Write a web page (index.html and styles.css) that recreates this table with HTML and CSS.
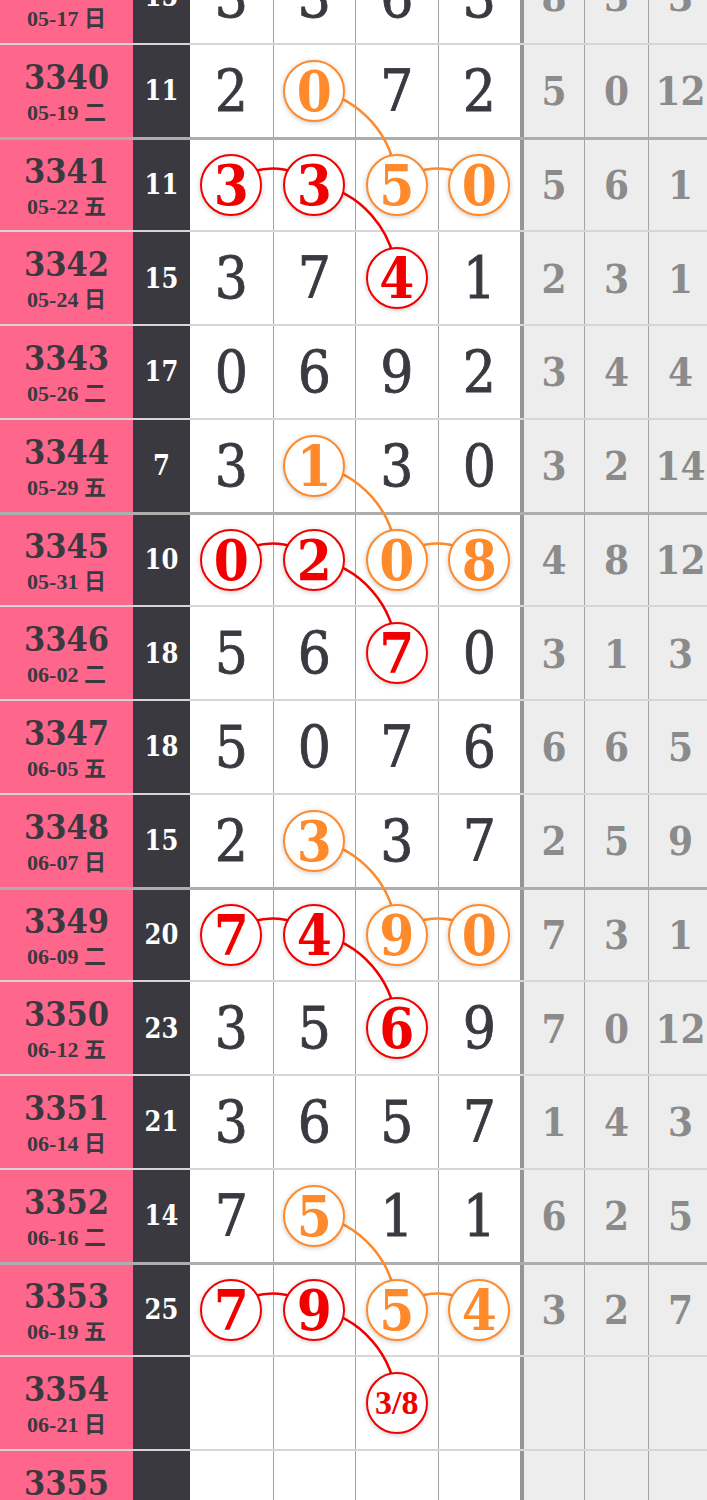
FILE: index.html
```html
<!DOCTYPE html>
<html lang="zh">
<head>
    <meta charset="UTF-8">
    <meta name="viewport" content="width=device-width, initial-scale=1.0">
    <title>走势图</title>
    <link rel="stylesheet" href="styles.css">
</head>
<body>
    <div class="board">
        <svg class="links" width="707" height="1500" viewBox="0 0 707 1500">
            <!-- group 3340-3342 -->
            <path class="orange-line" d="M313.75 89.9 A98 98 0 0 1 396.25 183.6"/>
            <path class="orange-line" d="M396.25 183.6 A64 64 0 0 1 478.75 183.6"/>
            <path class="red-line" d="M231.25 183.6 A64 64 0 0 1 313.75 183.6"/>
            <path class="red-line" d="M313.75 183.6 A98 98 0 0 1 396.25 277.4"/>
            <!-- group 3344-3346 -->
            <path class="orange-line" d="M313.75 464.9 A98 98 0 0 1 396.25 558.6"/>
            <path class="orange-line" d="M396.25 558.6 A64 64 0 0 1 478.75 558.6"/>
            <path class="red-line" d="M231.25 558.6 A64 64 0 0 1 313.75 558.6"/>
            <path class="red-line" d="M313.75 558.6 A98 98 0 0 1 396.25 652.4"/>
            <!-- group 3348-3350 -->
            <path class="orange-line" d="M313.75 839.9 A98 98 0 0 1 396.25 933.6"/>
            <path class="orange-line" d="M396.25 933.6 A64 64 0 0 1 478.75 933.6"/>
            <path class="red-line" d="M231.25 933.6 A64 64 0 0 1 313.75 933.6"/>
            <path class="red-line" d="M313.75 933.6 A98 98 0 0 1 396.25 1027.4"/>
            <!-- group 3352-3354 -->
            <path class="orange-line" d="M313.75 1214.9 A98 98 0 0 1 396.25 1308.6"/>
            <path class="orange-line" d="M396.25 1308.6 A64 64 0 0 1 478.75 1308.6"/>
            <path class="red-line" d="M231.25 1308.6 A64 64 0 0 1 313.75 1308.6"/>
            <path class="red-line" d="M313.75 1308.6 A98 98 0 0 1 396.25 1402.4"/>
        </svg>

        <div class="row">
            <div class="issue"><b>3339</b><span>05-17 日</span></div>
            <div class="sum">15</div>
            <div class="num first">3</div><div class="num">3</div><div class="num">6</div><div class="num">3</div>
            <div class="gray first">8</div><div class="gray">3</div><div class="gray">3</div>
        </div>
        <div class="row">
            <div class="issue"><b>3340</b><span>05-19 二</span></div>
            <div class="sum">11</div>
            <div class="num first">2</div><div class="num"><i class="ball orange">0</i></div><div class="num">7</div><div class="num">2</div>
            <div class="gray first">5</div><div class="gray">0</div><div class="gray">12</div>
        </div>
        <div class="row group">
            <div class="issue"><b>3341</b><span>05-22 五</span></div>
            <div class="sum">11</div>
            <div class="num first"><i class="ball red">3</i></div><div class="num"><i class="ball red">3</i></div><div class="num"><i class="ball orange">5</i></div><div class="num"><i class="ball orange">0</i></div>
            <div class="gray first">5</div><div class="gray">6</div><div class="gray">1</div>
        </div>
        <div class="row">
            <div class="issue"><b>3342</b><span>05-24 日</span></div>
            <div class="sum">15</div>
            <div class="num first">3</div><div class="num">7</div><div class="num"><i class="ball red">4</i></div><div class="num">1</div>
            <div class="gray first">2</div><div class="gray">3</div><div class="gray">1</div>
        </div>
        <div class="row">
            <div class="issue"><b>3343</b><span>05-26 二</span></div>
            <div class="sum">17</div>
            <div class="num first">0</div><div class="num">6</div><div class="num">9</div><div class="num">2</div>
            <div class="gray first">3</div><div class="gray">4</div><div class="gray">4</div>
        </div>
        <div class="row">
            <div class="issue"><b>3344</b><span>05-29 五</span></div>
            <div class="sum">7</div>
            <div class="num first">3</div><div class="num"><i class="ball orange">1</i></div><div class="num">3</div><div class="num">0</div>
            <div class="gray first">3</div><div class="gray">2</div><div class="gray">14</div>
        </div>
        <div class="row group">
            <div class="issue"><b>3345</b><span>05-31 日</span></div>
            <div class="sum">10</div>
            <div class="num first"><i class="ball red">0</i></div><div class="num"><i class="ball red">2</i></div><div class="num"><i class="ball orange">0</i></div><div class="num"><i class="ball orange">8</i></div>
            <div class="gray first">4</div><div class="gray">8</div><div class="gray">12</div>
        </div>
        <div class="row">
            <div class="issue"><b>3346</b><span>06-02 二</span></div>
            <div class="sum">18</div>
            <div class="num first">5</div><div class="num">6</div><div class="num"><i class="ball red">7</i></div><div class="num">0</div>
            <div class="gray first">3</div><div class="gray">1</div><div class="gray">3</div>
        </div>
        <div class="row">
            <div class="issue"><b>3347</b><span>06-05 五</span></div>
            <div class="sum">18</div>
            <div class="num first">5</div><div class="num">0</div><div class="num">7</div><div class="num">6</div>
            <div class="gray first">6</div><div class="gray">6</div><div class="gray">5</div>
        </div>
        <div class="row">
            <div class="issue"><b>3348</b><span>06-07 日</span></div>
            <div class="sum">15</div>
            <div class="num first">2</div><div class="num"><i class="ball orange">3</i></div><div class="num">3</div><div class="num">7</div>
            <div class="gray first">2</div><div class="gray">5</div><div class="gray">9</div>
        </div>
        <div class="row group">
            <div class="issue"><b>3349</b><span>06-09 二</span></div>
            <div class="sum">20</div>
            <div class="num first"><i class="ball red">7</i></div><div class="num"><i class="ball red">4</i></div><div class="num"><i class="ball orange">9</i></div><div class="num"><i class="ball orange">0</i></div>
            <div class="gray first">7</div><div class="gray">3</div><div class="gray">1</div>
        </div>
        <div class="row">
            <div class="issue"><b>3350</b><span>06-12 五</span></div>
            <div class="sum">23</div>
            <div class="num first">3</div><div class="num">5</div><div class="num"><i class="ball red">6</i></div><div class="num">9</div>
            <div class="gray first">7</div><div class="gray">0</div><div class="gray">12</div>
        </div>
        <div class="row">
            <div class="issue"><b>3351</b><span>06-14 日</span></div>
            <div class="sum">21</div>
            <div class="num first">3</div><div class="num">6</div><div class="num">5</div><div class="num">7</div>
            <div class="gray first">1</div><div class="gray">4</div><div class="gray">3</div>
        </div>
        <div class="row">
            <div class="issue"><b>3352</b><span>06-16 二</span></div>
            <div class="sum">14</div>
            <div class="num first">7</div><div class="num"><i class="ball orange">5</i></div><div class="num">1</div><div class="num">1</div>
            <div class="gray first">6</div><div class="gray">2</div><div class="gray">5</div>
        </div>
        <div class="row group">
            <div class="issue"><b>3353</b><span>06-19 五</span></div>
            <div class="sum">25</div>
            <div class="num first"><i class="ball red">7</i></div><div class="num"><i class="ball red">9</i></div><div class="num"><i class="ball orange">5</i></div><div class="num"><i class="ball orange">4</i></div>
            <div class="gray first">3</div><div class="gray">2</div><div class="gray">7</div>
        </div>
        <div class="row">
            <div class="issue"><b>3354</b><span>06-21 日</span></div>
            <div class="sum"></div>
            <div class="num first"></div><div class="num"></div><div class="num"><i class="ball red guess">3/8</i></div><div class="num"></div>
            <div class="gray first"></div><div class="gray"></div><div class="gray"></div>
        </div>
        <div class="row">
            <div class="issue"><b>3355</b><span>06-23 二</span></div>
            <div class="sum"></div>
            <div class="num first"></div><div class="num"></div><div class="num"></div><div class="num"></div>
            <div class="gray first"></div><div class="gray"></div><div class="gray"></div>
        </div>
    </div>
</body>
</html>
```

FILE: styles.css
```css
body {
    margin: 0;
    overflow: hidden;
    background: #fff;
    font-family: "DejaVu Serif", "Noto Sans CJK SC", serif;
    font-stretch: condensed;
    color: #3a3940;
}

.board {
    position: relative;
    margin-top: -51px;
}

.links {
    position: absolute;
    left: 0;
    top: 51px;
    z-index: 1;
    overflow: visible;
}

.links path {
    fill: none;
    stroke-width: 2.5;
}

.orange-line {
    stroke: #ff8a2b;
}

.red-line {
    stroke: #f20000;
}

.row {
    display: grid;
    grid-template-columns: 133px 57px repeat(4, 82.5px) repeat(3, 64px);
    height: 93.75px;
    box-sizing: border-box;
    border-top: 2px solid rgba(0, 0, 0, 0.16);
}

.row.group {
    border-top: 3px solid rgba(0, 0, 0, 0.32);
}

.issue {
    background: #fe678b;
    display: flex;
    flex-direction: column;
    align-items: center;
    justify-content: center;
    gap: 8px;
    padding-top: 2px;
}

.issue b {
    font-size: 34px;
    line-height: 1;
}

.issue span {
    font-family: "Liberation Serif", "Noto Sans CJK SC", serif;
    font-weight: bold;
    font-size: 22px;
    line-height: 1;
}

.sum {
    background: #3a3940;
    color: #fff;
    font-weight: bold;
    font-size: 27px;
    display: flex;
    align-items: center;
    justify-content: center;
}

.num {
    display: flex;
    align-items: center;
    justify-content: center;
    font-size: 58px;
    line-height: 1;
    -webkit-text-stroke: 0.8px #3a3940;
    border-left: 1px solid #a3a3a3;
}

.num.first {
    border-left: none;
}

.gray {
    background: #ededed;
    color: #8b8b8b;
    font-weight: bold;
    font-size: 40px;
    display: flex;
    align-items: center;
    justify-content: center;
    border-left: 1px solid #a3a3a3;
}

.gray.first {
    border-left: 4px solid #949494;
}

.ball {
    position: relative;
    z-index: 2;
    width: 62px;
    height: 62px;
    box-sizing: border-box;
    border-radius: 50%;
    border: 2.5px solid;
    background: #fff;
    display: flex;
    align-items: center;
    justify-content: center;
    font-style: normal;
    font-weight: bold;
    font-size: 56px;
    -webkit-text-stroke: 0;
    box-shadow: 0 1px 5px rgba(0, 0, 0, 0.22);
}

.ball.red {
    color: #f20000;
    border-color: #f20000;
}

.ball.orange {
    color: #ff8a2b;
    border-color: #ff8a2b;
}

.ball.guess {
    font-family: "Liberation Serif", serif;
    font-size: 34px;
}
```
